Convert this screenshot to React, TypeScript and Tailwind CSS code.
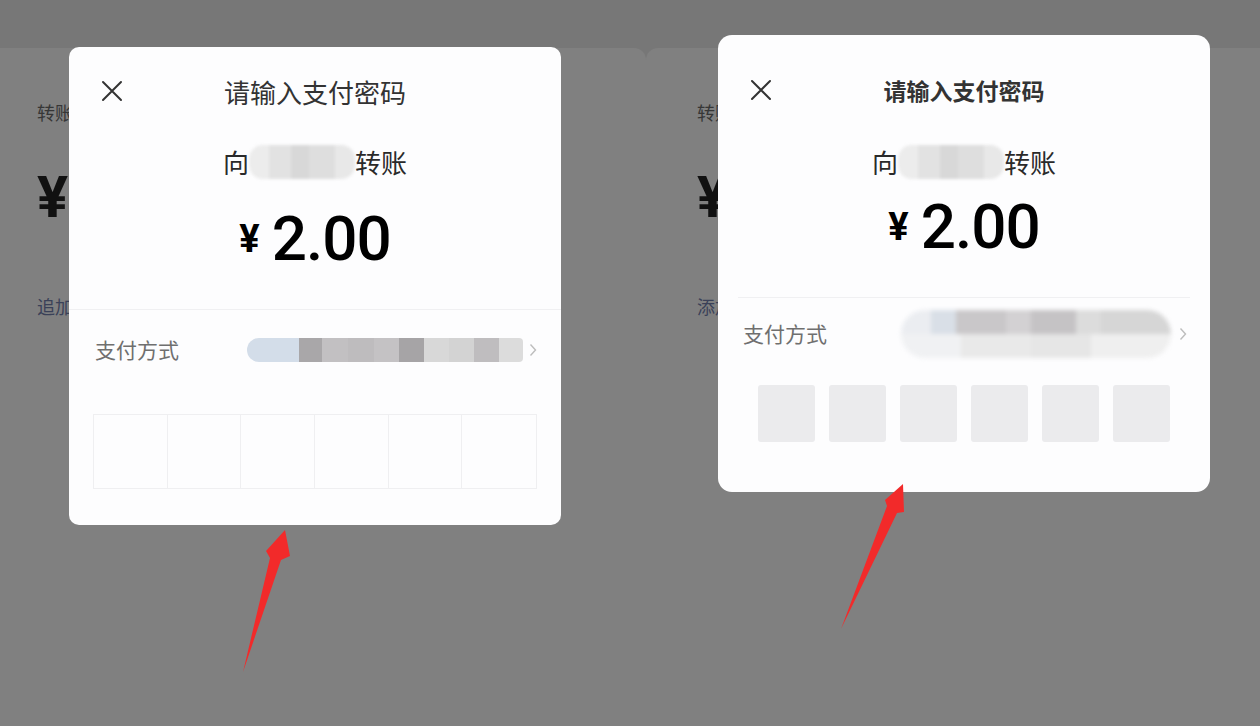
import React from "react";

function CloseIcon() {
  return (
    <svg width="22" height="22" viewBox="0 0 22 22" fill="none">
      <path d="M2 2 L20 20 M20 2 L2 20" stroke="#333" strokeWidth="2" strokeLinecap="round" />
    </svg>
  );
}

function Chevron() {
  return (
    <svg width="8" height="14" viewBox="0 0 8 14" fill="none">
      <path d="M1.5 1.5 L6.5 7 L1.5 12.5" stroke="#bdbdbd" strokeWidth="1.4" />
    </svg>
  );
}

function NameBlur() {
  return (
    <span className="inline-flex h-[34px] w-[106px] overflow-hidden rounded-[14px] blur-[1.5px]">
      <span className="w-[20px] bg-[#ececec]" />
      <span className="w-[22px] bg-[#e2e2e2]" />
      <span className="w-[18px] bg-[#d8d8d8]" />
      <span className="w-[26px] bg-[#dedede]" />
      <span className="w-[20px] bg-[#e8e8e8]" />
    </span>
  );
}

function Amount() {
  return (
    <div className="flex items-center justify-center gap-[12px] font-['Roboto',sans-serif] text-black">
      <span className="text-[38px] font-bold leading-none">¥</span>
      <span className="text-[62px] font-medium leading-none tracking-[-1px]">2.00</span>
    </div>
  );
}

function Subtitle() {
  return (
    <div className="flex h-[32px] items-center justify-center text-[26px] leading-none text-[#2a2a2a]">
      <span>向</span>
      <NameBlur />
      <span>转账</span>
    </div>
  );
}

function LeftModal() {
  return (
    <div className="absolute left-[69px] top-[47px] flex h-[478px] w-[492px] flex-col rounded-[10px] bg-[#fdfdfe]">
      <div className="relative flex h-[88px] items-center justify-center">
        <span className="absolute left-[32px] top-[33px]">
          <CloseIcon />
        </span>
        <span className="text-[26px] font-normal text-[#333]">请输入支付密码</span>
      </div>
      <div className="mt-[11px]">
        <Subtitle />
      </div>
      <div className="mt-[26px] flex h-[70px] items-center justify-center">
        <Amount />
      </div>
      <div className="mt-[35px] h-px bg-[#f0f0f2]" />
      <div className="mt-[20px] flex h-[40px] items-center pl-[26px] pr-[24px]">
        <span className="text-[21px] text-[#6f6f6f]">支付方式</span>
        <div className="ml-[68px] flex h-[24px] flex-1 overflow-hidden rounded-l-[12px] rounded-r-[4px] blur-[0.6px]">
          <span className="w-[52px] bg-[#d3dde9]" />
          <span className="w-[23px] bg-[#a9a7a9]" />
          <span className="w-[26px] bg-[#c2c0c2]" />
          <span className="w-[26px] bg-[#bebcbe]" />
          <span className="w-[25px] bg-[#c4c2c4]" />
          <span className="w-[25px] bg-[#a6a4a6]" />
          <span className="w-[25px] bg-[#d8d8d8]" />
          <span className="w-[25px] bg-[#d3d3d3]" />
          <span className="w-[25px] bg-[#bfbdbf]" />
          <span className="flex-1 bg-[#dcdcdc]" />
        </div>
        <span className="ml-[6px]">
          <Chevron />
        </span>
      </div>
      <div className="mx-[24px] mt-[44px] grid h-[75px] grid-cols-6 border border-[#efeff1]">
        {[0, 1, 2, 3, 4, 5].map((i) => (
          <div key={i} className={i < 5 ? "border-r border-[#efeff1]" : ""} />
        ))}
      </div>
    </div>
  );
}

function RightModal() {
  return (
    <div className="absolute left-[718px] top-[35px] flex h-[457px] w-[492px] flex-col rounded-[14px] bg-[#fdfdfe]">
      <div className="relative flex h-[110px] items-center justify-center">
        <span className="absolute left-[32px] top-[44px]">
          <CloseIcon />
        </span>
        <span className="text-[23px] font-bold text-[#333]">请输入支付密码</span>
      </div>
      <div className="mt-[1px]">
        <Subtitle />
      </div>
      <div className="mt-[14px] flex h-[70px] items-center justify-center">
        <Amount />
      </div>
      <div className="mx-[20px] mt-[35px] h-px bg-[#f0f0f2]" />
      <div className="mt-[11px] flex h-[50px] items-center pl-[25px] pr-[23px]">
        <span className="text-[21px] text-[#6f6f6f]">支付方式</span>
        <div className="ml-[74px] flex h-[48px] w-[270px] flex-col overflow-hidden rounded-[24px] blur-[2px]">
          <div className="flex h-[24px]">
            <span className="w-[30px] bg-[#ebedf1]" />
            <span className="w-[25px] bg-[#d9dfe7]" />
            <span className="w-[50px] bg-[#c9c7c9]" />
            <span className="w-[25px] bg-[#d3d1d3]" />
            <span className="w-[45px] bg-[#c5c3c5]" />
            <span className="w-[25px] bg-[#dcdcdc]" />
            <span className="flex-1 bg-[#d6d6d6]" />
          </div>
          <div className="flex h-[24px]">
            <span className="w-[60px] bg-[#f0f1f3]" />
            <span className="w-[70px] bg-[#e9e9e9]" />
            <span className="w-[60px] bg-[#e6e6e6]" />
            <span className="flex-1 bg-[#efefef]" />
          </div>
        </div>
        <span className="ml-[8px]">
          <Chevron />
        </span>
      </div>
      <div className="mx-[40px] mt-[26px] flex h-[57px] gap-[14px]">
        {[0, 1, 2, 3, 4, 5].map((i) => (
          <div key={i} className="flex-1 rounded-[3px] bg-[#ebebed]" />
        ))}
      </div>
    </div>
  );
}

function SheetContent({ link }: { link: string }) {
  return (
    <>
      <span className="mt-[54px] text-[18px] leading-[20px] text-[#363636]">转账</span>
      <span className="mt-[44px] font-['Roboto',sans-serif] text-[58px] font-bold leading-[62px] text-[#111]">¥</span>
      <span className="mt-[68px] text-[18px] leading-[20px] text-[#3a4158]">{link}</span>
    </>
  );
}

export default function App() {
  return (
    <div className="relative h-[726px] w-[1260px] overflow-hidden bg-[#777777] font-['Noto_Sans_CJK_SC',sans-serif]">
      <div className="flex h-full flex-col">
        <div className="h-[48px]" />
        <div className="flex flex-1">
          <div className="flex w-[646px] flex-col rounded-tr-[12px] bg-[#808080] pl-[37px]">
            <SheetContent link="追加" />
          </div>
          <div className="flex flex-1 flex-col rounded-tl-[12px] bg-[#808080] pl-[51px]">
            <SheetContent link="添加" />
          </div>
        </div>
      </div>
      <LeftModal />
      <RightModal />
      <svg className="absolute left-0 top-0" width="1260" height="726" viewBox="0 0 1260 726">
        <polygon points="285,530 290,556 281,560 243,672 270,558 266,551" fill="#f22a2a" />
        <polygon points="903,484 904,512 897,513 841,629 887,506 885,500" fill="#f22a2a" />
      </svg>
    </div>
  );
}
